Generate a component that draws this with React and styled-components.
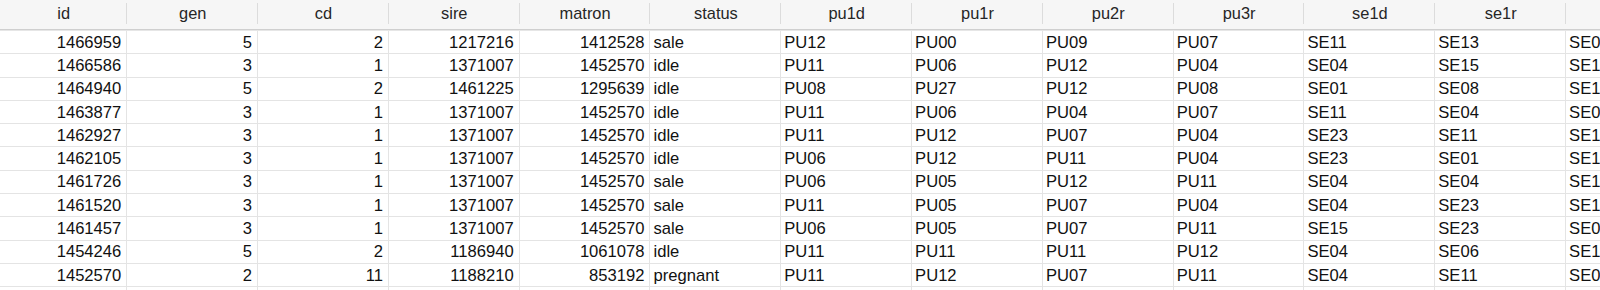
import React from "react";
import styled, { createGlobalStyle } from "styled-components";

const GlobalStyle = createGlobalStyle`
  html, body {
    margin: 0;
    padding: 0;
    background: #fff;
  }
  body {
    font-family: "Liberation Sans", Arial, sans-serif;
  }
`;

const columns = [
  { key: "id", align: "right" },
  { key: "gen", align: "right" },
  { key: "cd", align: "right" },
  { key: "sire", align: "right" },
  { key: "matron", align: "right" },
  { key: "status", align: "left" },
  { key: "pu1d", align: "left" },
  { key: "pu1r", align: "left" },
  { key: "pu2r", align: "left" },
  { key: "pu3r", align: "left" },
  { key: "se1d", align: "left" },
  { key: "se1r", align: "left" },
  { key: "se2d", align: "left" },
];

const rows = [
  ["1466959", "5", "2", "1217216", "1412528", "sale", "PU12", "PU00", "PU09", "PU07", "SE11", "SE13", "SE06"],
  ["1466586", "3", "1", "1371007", "1452570", "idle", "PU11", "PU06", "PU12", "PU04", "SE04", "SE15", "SE11"],
  ["1464940", "5", "2", "1461225", "1295639", "idle", "PU08", "PU27", "PU12", "PU08", "SE01", "SE08", "SE11"],
  ["1463877", "3", "1", "1371007", "1452570", "idle", "PU11", "PU06", "PU04", "PU07", "SE11", "SE04", "SE08"],
  ["1462927", "3", "1", "1371007", "1452570", "idle", "PU11", "PU12", "PU07", "PU04", "SE23", "SE11", "SE11"],
  ["1462105", "3", "1", "1371007", "1452570", "idle", "PU06", "PU12", "PU11", "PU04", "SE23", "SE01", "SE11"],
  ["1461726", "3", "1", "1371007", "1452570", "sale", "PU06", "PU05", "PU12", "PU11", "SE04", "SE04", "SE11"],
  ["1461520", "3", "1", "1371007", "1452570", "sale", "PU11", "PU05", "PU07", "PU04", "SE04", "SE23", "SE11"],
  ["1461457", "3", "1", "1371007", "1452570", "sale", "PU06", "PU05", "PU07", "PU11", "SE15", "SE23", "SE04"],
  ["1454246", "5", "2", "1186940", "1061078", "idle", "PU11", "PU11", "PU11", "PU12", "SE04", "SE06", "SE15"],
  ["1452570", "2", "11", "1188210", "853192", "pregnant", "PU11", "PU12", "PU07", "PU11", "SE04", "SE11", "SE04"],
  ["1451002", "3", "1", "1371007", "1452570", "idle", "PU11", "PU06", "PU12", "PU07", "SE04", "SE15", "SE11"],
];

const GRID = "127.3px repeat(12, 130.8px)";

export default function App() {
  return (
    <>
      <GlobalStyle />
      <Viewport>
        <HeaderRow>
          {columns.map((c) => (
            <HeaderCell key={c.key}>{c.key}</HeaderCell>
          ))}
        </HeaderRow>
        {rows.map((r, i) => (
          <Row key={i}>
            {r.map((v, j) => (
              <Cell key={j} $align={columns[j].align}>
                {v}
              </Cell>
            ))}
          </Row>
        ))}
      </Viewport>
    </>
  );
}

const Viewport = styled.div`
  width: 1600px;
  height: 290px;
  overflow: hidden;
  background: #fff;
`;

const HeaderRow = styled.div`
  display: grid;
  grid-template-columns: ${GRID};
  height: 29px;
  background: #f6f6f6;
  border-bottom: 1px solid #cfcfcf;
  box-shadow: 0 1px 0 #e6e6e6;
  margin-bottom: 1px;
`;

const HeaderCell = styled.div`
  position: relative;
  display: flex;
  align-items: center;
  justify-content: center;
  font-size: 16.4px;
  color: #262626;
  padding-bottom: 2px;

  &::after {
    content: "";
    position: absolute;
    right: 0;
    top: 3px;
    bottom: 5px;
    width: 1px;
    background: #dcdcdc;
  }
`;

const Row = styled.div`
  display: grid;
  grid-template-columns: ${GRID};
  height: 23.3px;
  box-sizing: border-box;
  border-bottom: 1px solid #e4e4e4;
`;

const Cell = styled.div`
  display: flex;
  align-items: center;
  justify-content: ${(p) => (p.$align === "right" ? "flex-end" : "flex-start")};
  padding: ${(p) => (p.$align === "right" ? "1px 5px 0 0" : "1px 0 0 3px")};
  border-right: 1px solid #e4e4e4;
  font-size: 16.6px;
  color: #111;
  white-space: nowrap;
  overflow: hidden;
`;
